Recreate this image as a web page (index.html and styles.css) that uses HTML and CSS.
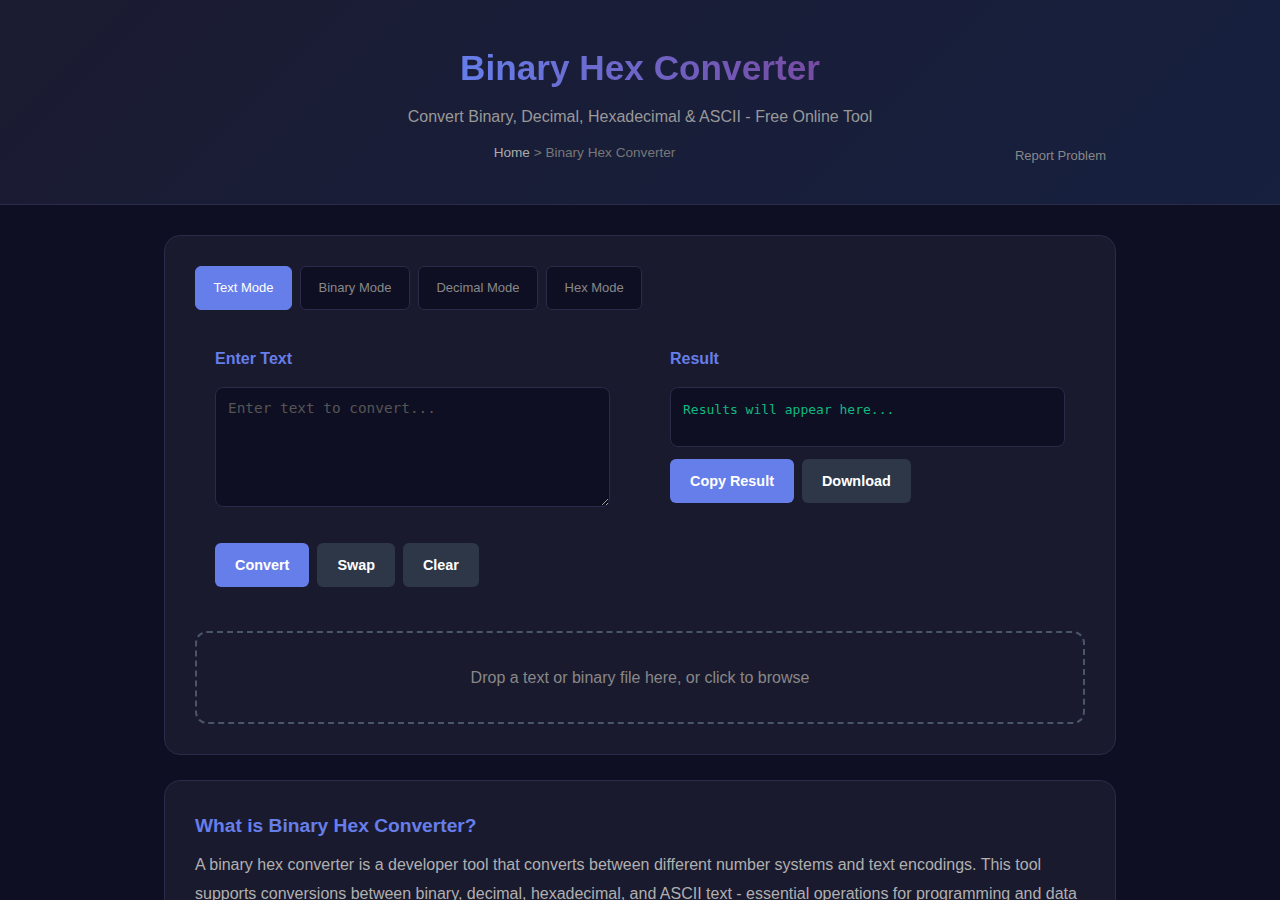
FILE: index.html
```html
<!DOCTYPE html>
<html lang="en">
<head>
  <meta charset="UTF-8">
  <title>Binary Hex Converter</title>
  <link rel="stylesheet" href="styles.css">
</head>
<body>

<header class="site-header">
  <h1>Binary Hex Converter</h1>
  <p class="subtitle">Convert Binary, Decimal, Hexadecimal &amp; ASCII - Free Online Tool</p>
  <div class="header-row">
    <nav class="breadcrumb"><a href="#">Home</a> &gt; Binary Hex Converter</nav>
    <a href="#" class="report-link">Report Problem</a>
  </div>
</header>

<main class="container">
  <section class="card tool-card">
    <div class="mode-tabs">
      <button class="tab active">Text Mode</button>
      <button class="tab">Binary Mode</button>
      <button class="tab">Decimal Mode</button>
      <button class="tab">Hex Mode</button>
    </div>

    <div class="converter">
      <div class="io-grid">
        <div class="io-col">
          <label for="input" class="io-label">Enter Text</label>
          <textarea id="input" placeholder="Enter text to convert..."></textarea>
        </div>
        <div class="io-col">
          <div class="io-label">Result</div>
          <div class="result-box">Results will appear here...</div>
          <div class="btn-row">
            <button class="btn btn-primary">Copy Result</button>
            <button class="btn btn-secondary">Download</button>
          </div>
        </div>
      </div>

      <div class="btn-row actions">
        <button class="btn btn-primary">Convert</button>
        <button class="btn btn-secondary">Swap</button>
        <button class="btn btn-secondary">Clear</button>
      </div>
    </div>

    <div class="drop-zone">Drop a text or binary file here, or click to browse</div>
  </section>

  <section class="card info-card">
    <h2>What is Binary Hex Converter?</h2>
    <p>A binary hex converter is a developer tool that converts between different number systems and text encodings. This tool supports conversions between binary, decimal, hexadecimal, and ASCII text - essential operations for programming and data analysis, debugging and low-level work.</p>
  </section>
</main>

</body>
</html>
```

FILE: styles.css
```css
* {
  box-sizing: border-box;
}
body {
  margin: 0;
  font-family: "Liberation Sans", Arial, sans-serif;
  background: #0f0f23;
  color: #e0e0e0;
}
a {
  text-decoration: none;
}

/* header */
.site-header {
  background: linear-gradient(135deg, #1b1b31 0%, #16203f 100%);
  border-bottom: 1px solid #2a2a4a;
  padding: 48px 20px 36px;
  text-align: center;
}
.site-header h1 {
  margin: 0;
  font-size: 35.2px;
  line-height: 40px;
  font-weight: bold;
  background: linear-gradient(90deg, #667eea 0%, #764ba2 100%);
  -webkit-background-clip: text;
  background-clip: text;
  color: transparent;
  display: inline-block;
}
.subtitle {
  margin: 19px 0 0;
  font-size: 16px;
  line-height: 20px;
  color: #999;
}
.header-row {
  max-width: 952px;
  margin: 17px auto 0;
  display: flex;
  align-items: flex-start;
}
.breadcrumb {
  flex: 1;
  font-size: 13.6px;
  line-height: 17px;
  color: #777;
}
.breadcrumb a {
  color: #aaa;
}
.report-link {
  font-size: 13px;
  line-height: 16px;
  color: #888;
  padding: 4px 10px;
}

/* layout */
.container {
  max-width: 952px;
  margin: 30px auto;
}
.card {
  background: #1a1a2e;
  border: 1px solid #2a2a4a;
  border-radius: 16px;
  padding: 30px;
}
.info-card {
  margin-top: 25px;
}

/* tabs */
.mode-tabs {
  display: flex;
  gap: 8px;
}
.tab {
  height: 44px;
  padding: 0 17.5px 1px;
  font-family: inherit;
  font-size: 13px;
  background: #0f0f23;
  color: #888;
  border: 1px solid #2a2a4a;
  border-radius: 6px;
  cursor: pointer;
}
.tab.active {
  background: #667eea;
  border-color: #667eea;
  color: #fff;
}

/* converter */
.converter {
  padding: 20px;
  margin-top: 20px;
}
.io-grid {
  display: grid;
  grid-template-columns: 1fr 1fr;
  gap: 60px;
}
.io-label {
  display: block;
  font-size: 16px;
  line-height: 18px;
  font-weight: bold;
  color: #667eea;
  margin-bottom: 19px;
}
textarea {
  display: block;
  width: 100%;
  height: 120px;
  padding: 12px;
  background: #0f0f23;
  border: 1px solid #2a2a4a;
  border-radius: 8px;
  color: #e0e0e0;
  font-family: "DejaVu Sans Mono", monospace;
  font-size: 14.4px;
  resize: vertical;
}
textarea::placeholder {
  color: #555;
}
.result-box {
  min-height: 60px;
  padding: 14px 12px;
  background: #0f0f23;
  border: 1px solid #2a2a4a;
  border-radius: 8px;
  color: #10b981;
  font-family: "DejaVu Sans Mono", monospace;
  font-size: 13px;
  line-height: 16px;
}
.btn-row {
  display: flex;
  gap: 8px;
  margin-top: 12px;
}
.btn-row.actions {
  margin-top: 36px;
}
.btn {
  height: 44px;
  padding: 0 20px;
  font-family: inherit;
  font-size: 14.4px;
  font-weight: bold;
  color: #fff;
  border: none;
  border-radius: 6px;
  cursor: pointer;
}
.btn-primary {
  background: #667eea;
}
.btn-secondary {
  background: #2d3748;
}

/* drop zone */
.drop-zone {
  margin-top: 24px;
  padding: 36px 20px;
  border: 2px dashed #4a5568;
  border-radius: 12px;
  text-align: center;
  font-size: 16px;
  line-height: 17px;
  color: #888;
  cursor: pointer;
}

/* info */
.info-card h2 {
  margin: 3px 0 0;
  font-size: 19.2px;
  line-height: 24px;
  color: #667eea;
}
.info-card p {
  margin: 13px 0 0;
  font-size: 16px;
  line-height: 28.8px;
  color: #b0b0b0;
}
```
